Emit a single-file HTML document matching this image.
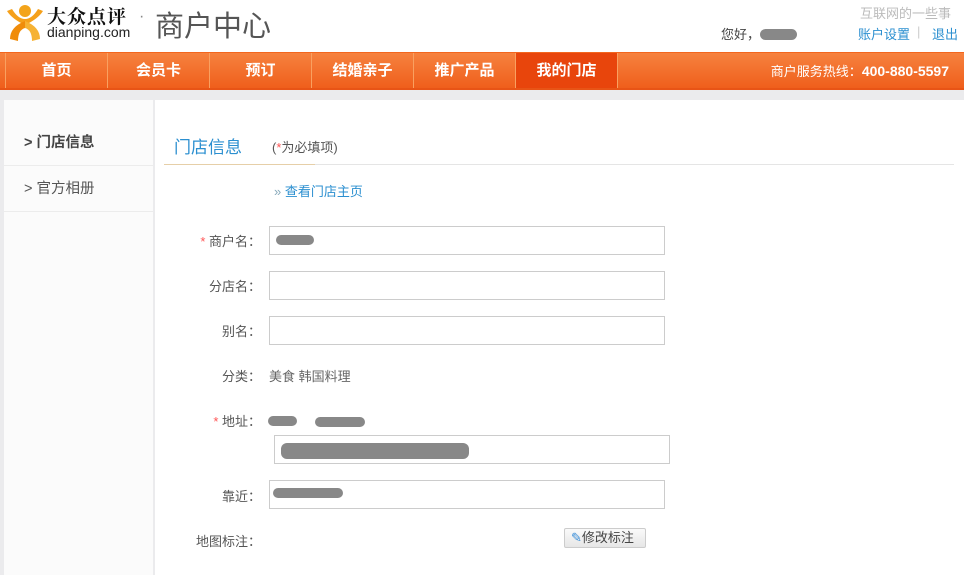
<!DOCTYPE html>
<html><head><meta charset="utf-8"><style>
*{margin:0;padding:0;box-sizing:border-box}
body{width:964px;height:575px;overflow:hidden;background:#ebebed;font-family:"Liberation Sans","Noto Sans CJK SC",sans-serif;font-size:13px;color:#555;position:relative}
.a{position:absolute}
.hdr{left:0;top:0;width:964px;height:52px;background:#fff}
.nav{left:0;top:52px;width:964px;height:38px;background:linear-gradient(#f6823f,#ef5f1c);border-top:1px solid #f3661e;border-bottom:2px solid #e85416}
.nav .it{position:absolute;top:0;height:35px;width:102px;border-left:1px solid #f9a060;color:#fff;font-weight:bold;font-size:15px;text-align:center;line-height:36px}
.side{left:4px;top:100px;width:149px;height:475px;background:#fbfbfb}
.main{left:155px;top:100px;width:809px;height:475px;background:#fff}
.si{position:absolute;left:0;width:149px;height:46px;border-bottom:1px solid #ececec;font-size:14.5px;line-height:46px;padding-left:20px;color:#555}
.lbl{position:absolute;width:80px;text-align:right;color:#555;font-size:13px}
.inp{position:absolute;height:29px;border:1px solid #ccc;background:#fff}
.blur{position:absolute;background:#888;border-radius:6px;height:10px}
.star{color:#f55}
</style></head><body>
<div class="a hdr"></div>
<svg class="a" style="left:4px;top:3px" width="42" height="40" viewBox="0 0 42 40"><circle cx="21" cy="8" r="6" fill="#f3a41b"/><path d="M3 8 Q8 16 21 22 Q34 16 39 8 L34 6 Q28 16 21 16 Q14 16 8 6Z" fill="#f5a01a"/><path d="M21 18 Q6 24 6 36 L14 38 Q14 27 21 25Z" fill="#f08c0a"/><path d="M21 18 Q36 24 36 36 L28 38 Q28 27 21 25Z" fill="#f6b233"/></svg>
<div class="a" style="left:47px;top:2px;font-size:19px;font-weight:bold;color:#111;letter-spacing:1px;font-family:'Noto Serif CJK SC',serif">大众点评</div>
<div class="a" style="left:47px;top:24px;font-size:14px;color:#222">dianping.com</div>
<div class="a" style="left:139px;top:8px;font-size:16px;color:#888">·</div>
<div class="a" style="left:155px;top:3px;font-size:29px;color:#555">商户中心</div>
<div class="a" style="left:860px;top:3px;font-size:13px;color:#bbb">互联网的一些事</div>
<div class="a" style="left:721px;top:24px;font-size:13px;color:#444">您好，</div>
<div class="blur" style="left:760px;top:29px;width:37px;height:11px"></div>
<div class="a" style="left:858px;top:24px;font-size:13px;color:#2b8fd0">账户设置</div>
<div class="a" style="left:917px;top:24px;color:#ccc">|</div>
<div class="a" style="left:932px;top:24px;font-size:13px;color:#2b8fd0">退出</div>
<div class="a nav">
<div class="it" style="left:5px">首页</div>
<div class="it" style="left:107px">会员卡</div>
<div class="it" style="left:209px">预订</div>
<div class="it" style="left:311px">结婚亲子</div>
<div class="it" style="left:413px">推广产品</div>
<div class="it" style="left:515px;background:#e8450c">我的门店</div>
<div class="it" style="left:617px;width:0"></div>
<div style="position:absolute;right:15px;top:0;line-height:36px;color:#fff;font-size:13px">商户服务热线：<b style="font-size:14px">400-880-5597</b></div>
</div>
<div class="a side">
<div class="si" style="top:20px;font-weight:bold;color:#444">&gt; 门店信息</div>
<div class="si" style="top:66px">&gt; 官方相册</div>
</div>
<div class="a main">
<div class="a" style="left:19px;top:33px;font-size:17px;color:#2b8fd0">门店信息</div>
<div class="a" style="left:117px;top:37px;font-size:13px;color:#555">(<span class="star">*</span>为必填项)</div>
<div class="a" style="left:9px;top:64px;width:790px;height:1px;background:#e5e5e5"></div>
<div class="a" style="left:9px;top:64px;width:151px;height:1px;background:#e6cfa8"></div>
<div class="a" style="left:119px;top:81px;color:#2b8fd0"><span style="color:#8ab">»</span> 查看门店主页</div>
</div>
<div class="lbl" style="left:181px;top:231px"><span class="star">* </span>商户名：</div>
<div class="inp" style="left:269px;top:226px;width:396px"></div><div class="blur" style="left:276px;top:235px;width:38px"></div>
<div class="lbl" style="left:181px;top:276px">分店名：</div>
<div class="inp" style="left:269px;top:271px;width:396px"></div>
<div class="lbl" style="left:181px;top:321px">别名：</div>
<div class="inp" style="left:269px;top:316px;width:396px"></div>
<div class="lbl" style="left:181px;top:366px">分类：</div>
<div class="a" style="left:269px;top:366px;color:#666">美食 韩国料理</div>
<div class="lbl" style="left:181px;top:411px"><span class="star">* </span>地址：</div>
<div class="blur" style="left:268px;top:416px;width:29px"></div><div class="blur" style="left:315px;top:417px;width:50px"></div>
<div class="inp" style="left:274px;top:435px;width:396px"></div>
<div class="blur" style="left:281px;top:443px;width:188px;height:16px"></div>
<div class="lbl" style="left:181px;top:486px">靠近：</div>
<div class="inp" style="left:269px;top:480px;width:396px"></div><div class="blur" style="left:273px;top:488px;width:70px"></div>
<div class="lbl" style="left:181px;top:531px">地图标注：</div>
<div class="a" style="left:564px;top:528px;width:82px;height:20px;border:1px solid #ccc;border-radius:2px;background:linear-gradient(#fafafa,#e6e6e6);font-size:13px;line-height:18px;padding-left:6px;color:#444"><span style="color:#3a8ed8">✎</span>修改标注</div>
</body></html>
